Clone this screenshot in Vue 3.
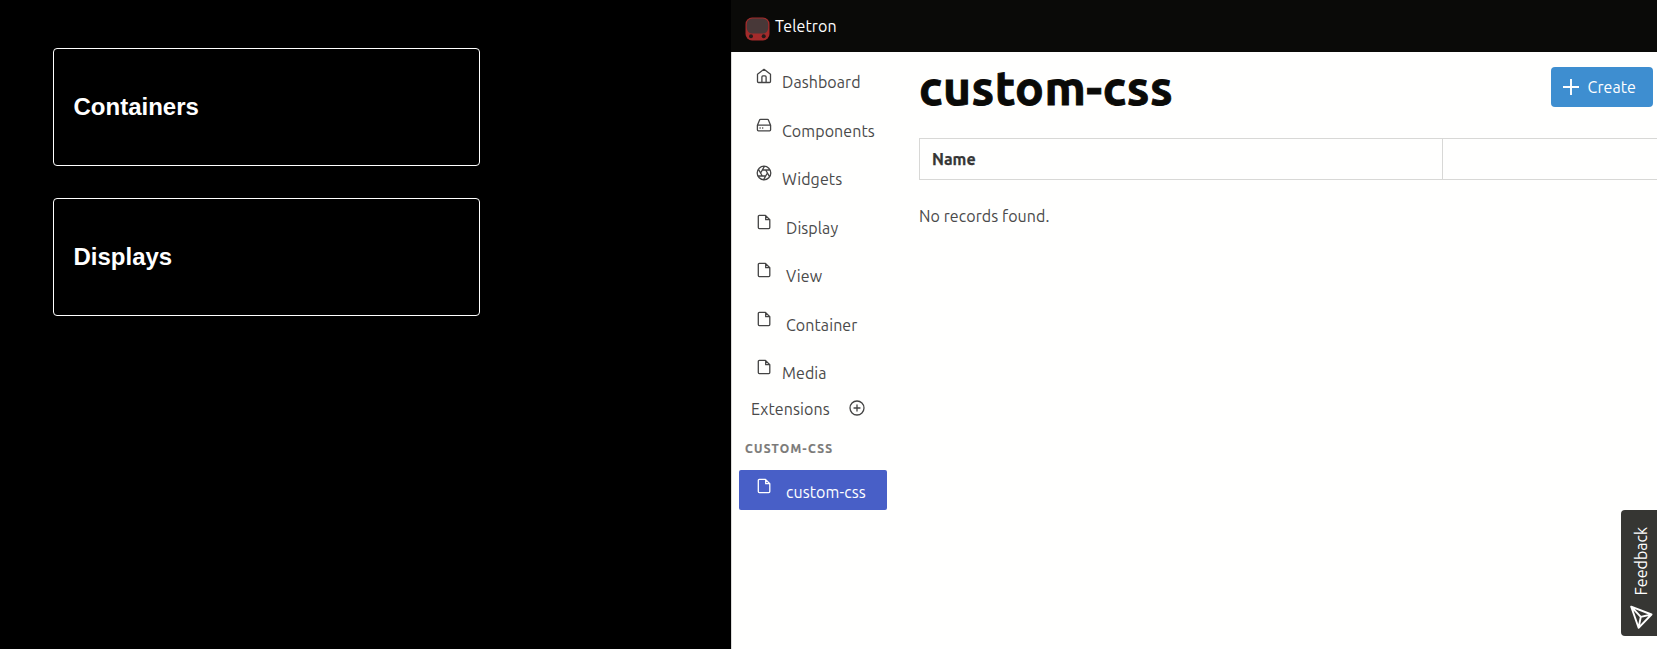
<script setup>
const items = [
  { label: 'Dashboard', icon: 'home' },
  { label: 'Components', icon: 'drive' },
  { label: 'Widgets', icon: 'aperture' },
  { label: 'Display', icon: 'file', indent: true },
  { label: 'View', icon: 'file', indent: true },
  { label: 'Container', icon: 'file', indent: true },
  { label: 'Media', icon: 'file' },
]
const paths = {
  home: 'M4.9 13.5H1.5a1 1 0 0 1-1-1V5.2L7 .3l6.5 4.9v7.3a1 1 0 0 1-1 1H9.1M4.9 13.5V7.9a1 1 0 0 1 1-1h2.2a1 1 0 0 1 1 1v5.6H4.9',
  drive: 'M.4 7.2L2.6 2.1a1 1 0 0 1 1-.7h6.8a1 1 0 0 1 1 .7l2.2 5.1v4.6a1 1 0 0 1-1 1H1.4a1 1 0 0 1-1-1zM.4 7.2h13.2M3 10h.2M5.6 10h.2',
  aperture: 'M7 .2a6.8 6.8 0 1 0 0 13.6A6.8 6.8 0 1 0 7 .2M8.7 4l3.8 6.6M5.3 4h7.6M3.6 7l3.8-6.6M5.3 10L1.5 3.4M8.7 10H1.1M10.4 7l-3.8 6.6',
  file: 'M2.3.4h6.2l4.3 4.3v7.9a1 1 0 0 1-1 1H2.3a1 1 0 0 1-1-1V1.4a1 1 0 0 1 1-1zM8.7.7v4h4',
}
</script>

<template>
  <div class="screen">
    <section class="preview">
      <div class="card">Containers</div>
      <div class="card">Displays</div>
    </section>
    <section class="app">
      <header>
        <svg class="logo" width="25" height="24" viewBox="0 0 25 24">
          <rect x="0.5" y="0.5" width="24" height="23" rx="6.5" fill="#a32b2b" />
          <rect x="1.8" y="1.5" width="21.4" height="15" rx="5.5" fill="#483838" />
          <circle cx="6" cy="19.3" r="2" fill="#241b1b" />
          <circle cx="18.7" cy="19.3" r="2" fill="#241b1b" />
        </svg>
        <span class="brand">Teletron</span>
      </header>
      <div class="body">
        <aside>
          <nav>
            <a v-for="it in items" :key="it.label" class="item" :class="{ indent: it.indent }">
              <svg width="14" height="14" viewBox="0 0 14 14"><path :d="paths[it.icon]" /></svg>
              <span>{{ it.label }}</span>
            </a>
          </nav>
          <div class="ext">
            <span>Extensions</span>
            <svg width="16" height="16" viewBox="0 0 16 16"><path d="M8 1a7 7 0 1 0 0 14A7 7 0 1 0 8 1M8 5v6M5 8h6" /></svg>
          </div>
          <div class="group">CUSTOM-CSS</div>
          <a class="item indent active">
            <svg width="14" height="14" viewBox="0 0 14 14"><path :d="paths.file" /></svg>
            <span>custom-css</span>
          </a>
        </aside>
        <main>
          <div class="top">
            <h1>custom-css</h1>
            <button>
              <svg width="16" height="16" viewBox="0 0 16 16"><path d="M8 0v16M0 8h16" /></svg>
              <span>Create</span>
            </button>
          </div>
          <div class="table">
            <div class="name">Name</div>
            <div></div>
          </div>
          <p>No records found.</p>
        </main>
      </div>
    </section>
    <div class="feedback">
      <svg width="23" height="24" viewBox="0 0 23 24"><path d="M1.2 1.7L21.5 9.5 8.6 22.8zM1.2 1.7l9.6 10.2L21.5 9.5M10.8 11.9L8.6 22.8" /></svg>
      <span>Feedback</span>
    </div>
  </div>
</template>

<style>
body { margin: 0; overflow: hidden; }
</style>
<style scoped>
* { box-sizing: border-box; }
.screen { position: relative; display: flex; width: 1657px; height: 649px; overflow: hidden; background: #000; font: 16px/24px Ubuntu, "Noto Sans", sans-serif; color: #4a4a4a; }
.preview { width: 731px; padding: 48px 0 0 53px; display: flex; flex-direction: column; gap: 32px; }
.card { width: 427px; height: 118px; border: 1px solid #fff; border-radius: 4px; display: flex; align-items: center; padding-left: 19.5px; font: bold 24px "Liberation Sans", Arial, sans-serif; color: #fff; }
.app { flex: 1; min-width: 0; display: flex; flex-direction: column; background: #fffffe; }
header { height: 52px; background: #0a0a08; display: flex; align-items: center; padding-left: 14px; color: #fff; }
.logo { margin-top: 5px; }
.brand { margin-left: 5px; letter-spacing: 0.1px; }
.body { flex: 1; display: flex; border-left: 1px solid #dcdcda; }
aside { width: 187px; padding: 6px 0 0 7px; }
.item { display: flex; align-items: center; width: 148px; height: 48.5px; padding-left: 18px; letter-spacing: 0.08px; }
.item svg, .ext svg { fill: none; stroke: #444; stroke-width: 1.3; stroke-linejoin: round; stroke-linecap: round; overflow: visible; }
.item svg { position: relative; top: -6px; margin-right: 11px; flex: none; }
.indent svg { margin-right: 15px; }
.ext { display: flex; align-items: center; height: 24px; margin-top: -1px; padding-left: 12px; gap: 19px; letter-spacing: 0.1px; }
.ext svg { position: relative; top: -1px; }
.group { margin: 16px 0 0 6px; height: 24px; font-size: 12px; font-weight: bold; letter-spacing: 1.3px; color: #7a7a78; -webkit-text-stroke: 0.2px #7a7a78; }
.active { margin-top: 9px; height: 40px; background: #485fc7; color: #fff; border-radius: 2px; }
.active span { position: relative; top: 2px; }
.active svg { stroke: #fff; top: -4px; }
main { flex: 1; min-width: 0; }
.top { display: flex; justify-content: space-between; height: 86px; padding-right: 4px; }
h1 { margin: 7px 0 0; font-size: 48px; line-height: 56px; font-weight: bold; color: #0a0a08; letter-spacing: 0.45px; -webkit-text-stroke: 0.9px #0a0a08; }
button { display: flex; align-items: center; width: 102px; height: 40px; margin: 15px 0 0; padding: 0 0 0 12px; gap: 8.5px; border: 0; border-radius: 4px; background: #3e8ed0; color: #fff; font: inherit; letter-spacing: 0.08px; }
button svg { stroke: #fff; stroke-width: 1.9; }
.table { display: flex; height: 42px; border: 1px solid #d8d8d6; border-right: 0; }
.name { width: 523px; border-right: 1px solid #d8d8d6; padding: 8px 0 0 12px; font-weight: bold; color: #363636; -webkit-text-stroke: 0.25px #363636; }
p { margin: 24px 0 0; letter-spacing: 0.08px; }
.feedback { position: absolute; right: 0; top: 510px; width: 36px; height: 126px; border-radius: 4px 0 0 4px; background: #363633; color: #fff; display: flex; flex-direction: column-reverse; align-items: center; padding-bottom: 7.5px; gap: 8.5px; }
.feedback svg { margin-left: 4px; fill: none; stroke: #fff; stroke-width: 1.9; stroke-linejoin: round; flex: none; }
.feedback span { writing-mode: vertical-rl; transform: rotate(180deg); white-space: nowrap; margin-left: 3px; }
</style>
